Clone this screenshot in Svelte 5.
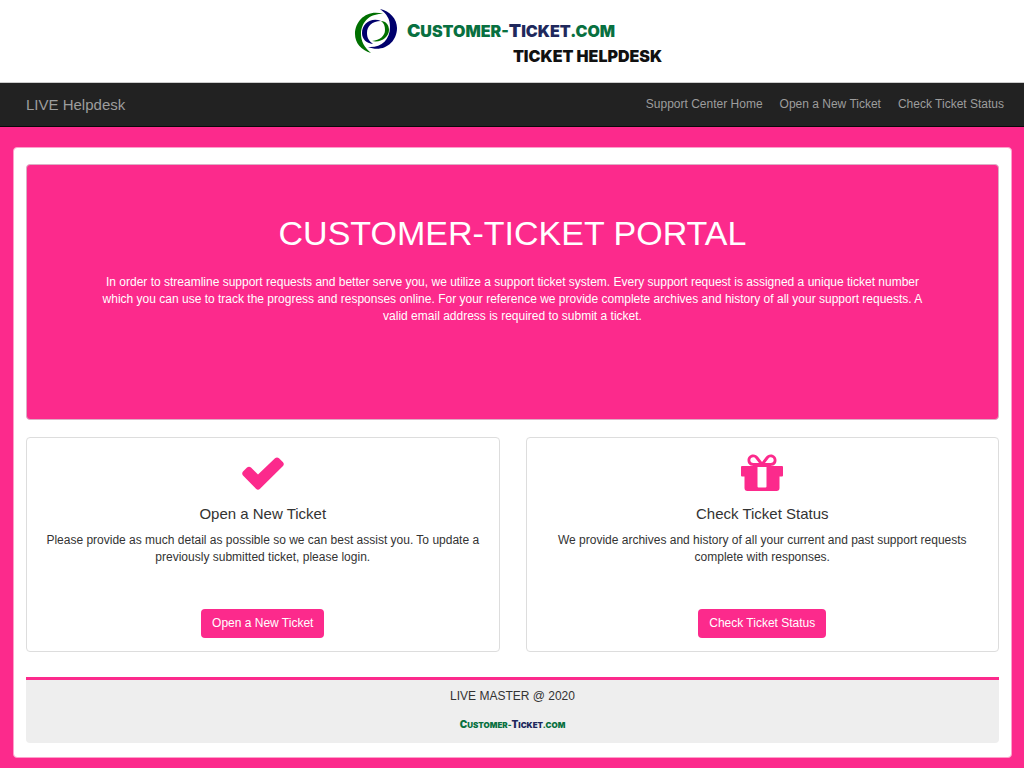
<script lang="ts">
  interface NavLink {
    label: string;
    href: string;
  }

  interface Card {
    icon: 'check' | 'gift';
    title: string;
    text: string;
    href: string;
  }

  const links: NavLink[] = [
    { label: 'Support Center Home', href: '#home' },
    { label: 'Open a New Ticket', href: '#open' },
    { label: 'Check Ticket Status', href: '#status' },
  ];

  const cards: Card[] = [
    {
      icon: 'check',
      title: 'Open a New Ticket',
      text: 'Please provide as much detail as possible so we can best assist you. To update a previously submitted ticket, please login.',
      href: '#open',
    },
    {
      icon: 'gift',
      title: 'Check Ticket Status',
      text: 'We provide archives and history of all your current and past support requests complete with responses.',
      href: '#status',
    },
  ];
</script>

{#snippet wordmark()}
  <span class="wordmark"><b>C</b>ustomer-<span class="navy"><b>T</b>icket</span>.com</span>
{/snippet}

<header class="masthead">
  <a class="logo" href="#home">
    <svg class="swirl" viewBox="0 0 44 46" aria-hidden="true">
      <path fill="#007000" d="M29 6C14 1 1 12 1 26c0 9 6 16 16 19C10 39 7 33 7 26 7 14 16 5 29 6Z" />
      <path fill="#00006c" d="M26 1c7 5 10 10 10 18 0 13-9 21-22 20 15 6 29-4 29-19C43 11 36 3 26 1Z" />
      <path fill="#00006c" d="M27 13C17 9 8 16 8 25c0 6 4 10 11 11-4-3-6-6-6-11 0-7 5-12 14-12Z" />
      <path fill="#007000" d="M27 13c3 2 4 5 4 9 0 6-5 10-13 11 9 2 17-4 17-11 0-5-3-9-8-9Z" />
    </svg>
    <span class="logo-text">
      {@render wordmark()}
      <span class="tagline">Ticket Helpdesk</span>
    </span>
  </a>
</header>

<nav class="navbar">
  <a class="brand" href="#home">LIVE Helpdesk</a>
  <ul>
    {#each links as link}
      <li><a href={link.href}>{link.label}</a></li>
    {/each}
  </ul>
</nav>

<div class="page">
  <main class="panel">
    <section class="hero">
      <h1>CUSTOMER-TICKET PORTAL</h1>
      <p>
        In order to streamline support requests and better serve you, we utilize a support ticket
        system. Every support request is assigned a unique ticket number which you can use to track
        the progress and responses online. For your reference we provide complete archives and
        history of all your support requests. A valid email address is required to submit a ticket.
      </p>
    </section>

    <section class="cards">
      {#each cards as card}
        <article class="card">
          <svg class="icon" viewBox="0 0 42 38" aria-hidden="true">
            {#if card.icon === 'check'}
              <path
                d="M1 17.500 5 13.500Q7 12 9 13.500L16 20.500 33 4.200Q35 2.600 37 4.200L41 8.200Q42.600 10 41 12L18 34.800Q16 36.500 14 34.800L1 21.500Q-.6 19.500 1 17.500Z"
              />
            {:else}
              <path
                fill-rule="evenodd"
                d="M12.500 12C8.500 12 6.500 9.500 6.500 6.300 6.500 3 9 .5 12.200.5c2.300 0 3.700 1 5 2.600L21 8l3.800-4.900c1.300-1.600 2.700-2.600 5-2.600 3.200 0 5.700 2.500 5.700 5.800 0 3.200-2 5.700-6 5.700H41q1 0 1 1v8.500q0 1-1 1h-2.500V34q0 3-3 3h-29q-3 0-3-3V22.500H1q-1 0-1-1V13q0-1 1-1ZM12.500 9H18l-3.300-4.300C13.900 3.700 13.200 3.300 12.200 3.300c-1.600 0-2.900 1.300-2.900 2.900S10.600 9 12.500 9Zm11.500 0h5.500c1.900 0 3.200-1.200 3.200-2.800s-1.300-2.900-2.900-2.900c-1 0-1.700.4-2.500 1.400ZM16.500 13v19.500q0 1 1 1h7q1 0 1-1V13Z"
              />
            {/if}
          </svg>
          <h2>{card.title}</h2>
          <p>{card.text}</p>
          <a class="button" href={card.href}>{card.title}</a>
        </article>
      {/each}
    </section>

    <footer class="footer">
      <p>LIVE MASTER @ 2020</p>
      <a class="footer-logo" href="#home">{@render wordmark()}</a>
    </footer>
  </main>
</div>

<style>
  :global(body) {
    margin: 0;
    background: #fc2a8c;
    color: #333;
    font-family: 'Liberation Sans', Arial, sans-serif;
    font-size: 12px;
    line-height: 17px;
  }

  a {
    color: inherit;
    text-decoration: none;
  }

  .masthead {
    display: flex;
    justify-content: center;
    padding: 8px 8px 13px 0;
    background: #fff;
    border-bottom: 1px solid #ccc;
  }

  .logo {
    display: flex;
    gap: 9px;
  }

  .swirl {
    width: 44px;
    height: 46px;
  }

  .logo-text {
    display: flex;
    flex-direction: column;
    padding-top: 10px;
  }

  .wordmark,
  .tagline {
    font-family: Inter, 'Open Sans', sans-serif;
    font-weight: 900;
    font-size: 16px;
    text-transform: uppercase;
    white-space: nowrap;
  }

  .wordmark {
    color: #087040;
    line-height: 26px;
  }

  .wordmark b {
    font-size: 18px;
    font-weight: 900;
    line-height: 1;
  }

  .navy {
    color: #20285c;
  }

  .tagline {
    margin-left: 106px;
    color: #111;
    line-height: 25px;
  }

  .navbar {
    display: flex;
    align-items: center;
    justify-content: space-between;
    box-sizing: border-box;
    min-height: 44px;
    padding: 0 20px 0 26px;
    border-bottom: 1px solid #090909;
    background: #222;
    color: #9d9d9d;
  }

  .brand {
    font-size: 15px;
  }

  .navbar ul {
    display: flex;
    gap: 17px;
    margin: 0;
    padding: 0;
    list-style: none;
  }

  .page {
    padding: 20px 12px 10px 13px;
  }

  .panel {
    padding: 16px 12px 14px;
    border: 1px solid #fda0cb;
    border-radius: 4px;
    background: #fff;
  }

  .hero {
    box-sizing: border-box;
    min-height: 256px;
    padding: 47px 72px;
    border: 1px solid #dcaec5;
    border-radius: 4px;
    background: #fc2a8c;
    color: #fff;
    text-align: center;
  }

  .hero h1 {
    margin: 0;
    font-size: 34px;
    font-weight: 400;
    line-height: 42px;
  }

  .hero p {
    margin: 20px 0 0;
  }

  .cards {
    display: grid;
    grid-template-columns: 1fr 1fr;
    gap: 26px;
    margin-top: 17px;
  }

  .card {
    display: flex;
    flex-direction: column;
    align-items: center;
    box-sizing: border-box;
    min-height: 215px;
    padding: 16px 12px 13px;
    border: 1px solid #ddd;
    border-radius: 4px;
    text-align: center;
  }

  .icon {
    width: 42px;
    height: 38px;
    fill: #fc2a8c;
  }

  .card h2 {
    margin: 12px 0 8px;
    font-size: 15px;
    font-weight: 400;
    line-height: 20px;
  }

  .card p {
    margin: 0;
  }

  .button {
    margin-top: auto;
    padding: 6px 11px;
    border-radius: 4px;
    background: #fc2a8c;
    color: #fff;
  }

  .footer {
    display: flex;
    flex-direction: column;
    align-items: center;
    margin-top: 25px;
    padding: 8px 0;
    border-top: 3px solid #fc2a8c;
    border-radius: 0 0 4px 4px;
    background: #eee;
  }

  .footer p {
    margin: 0 0 10px;
  }

  .footer-logo .wordmark {
    display: block;
    font-size: 8px;
    line-height: 20px;
  }

  .footer-logo b {
    font-size: 10px;
  }
</style>
